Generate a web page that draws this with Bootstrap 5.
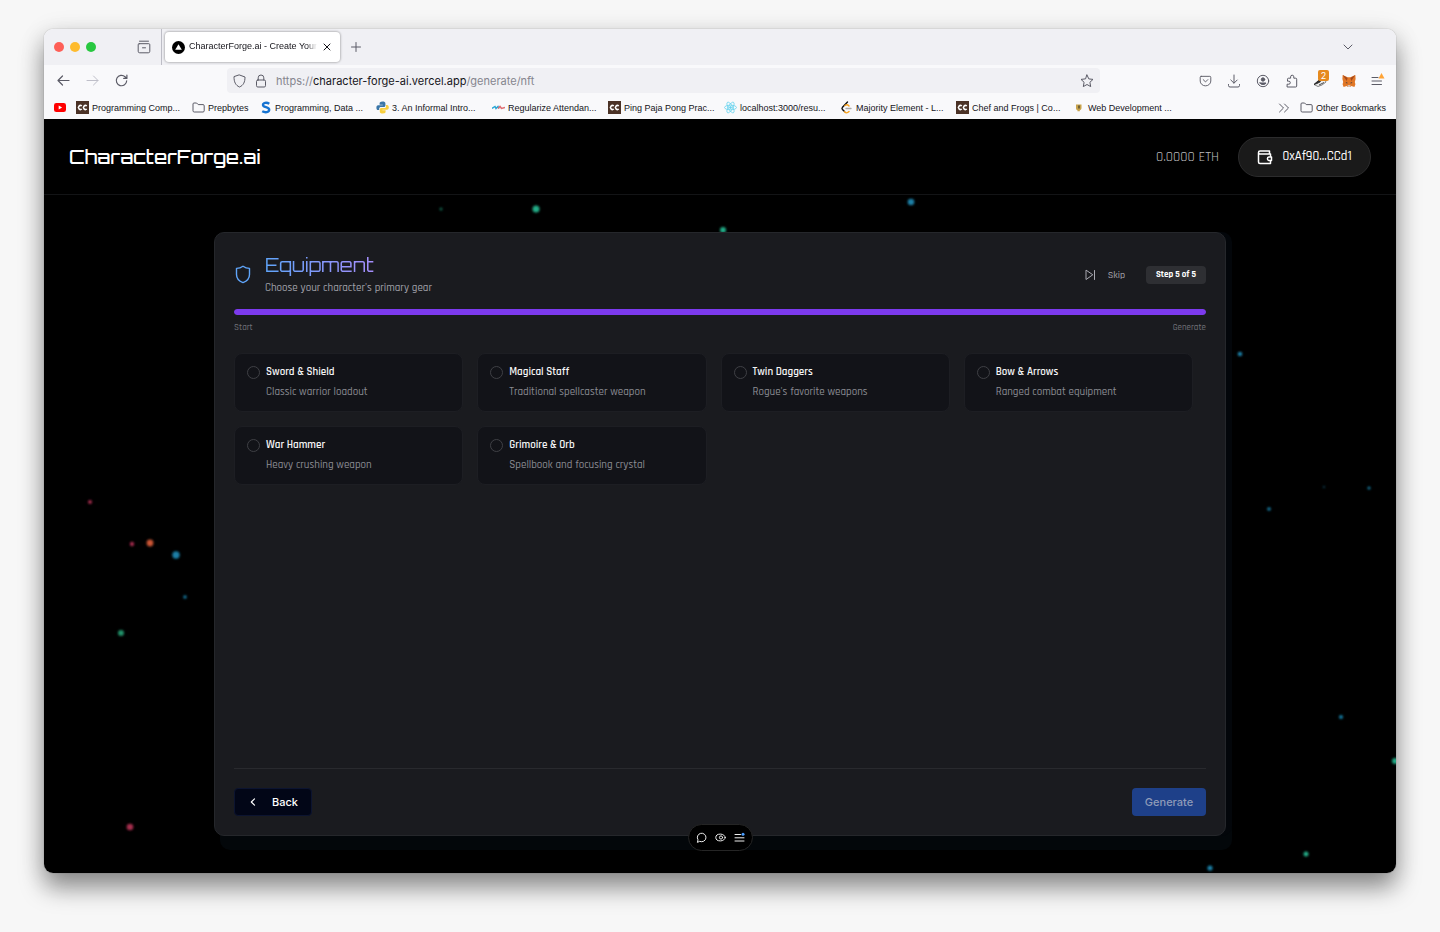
<!DOCTYPE html>
<html lang="en" data-bs-theme="light">
<head>
<meta charset="utf-8">
<meta name="viewport" content="width=device-width, initial-scale=1">
<title>CharacterForge.ai - Create Your Character</title>
<link href="https://cdn.jsdelivr.net/npm/bootstrap@5.3.0/dist/css/bootstrap.min.css" rel="stylesheet">
<style>
body{background:#f7f7f7;padding:29px 44px 59px;font-family:Inter,"Liberation Sans",sans-serif;color:#15141a}
svg{display:block;flex:none}
.ico{fill:none;stroke:currentColor;stroke-linecap:round;stroke-linejoin:round}
.plain{border:0;background:none;padding:0;color:inherit;display:flex;align-items:center}
.window{border-radius:9px;box-shadow:0 0 1px rgba(0,0,0,.5),0 15px 24px rgba(0,0,0,.4),0 4px 26px rgba(0,0,0,.12)}
.chrome{border-radius:9px 9px 0 0;background:#f9f9fb;color:#5b5b66}
.tabs-strip{height:36px;background:#f0f0f4;border-radius:9px 9px 0 0;padding:0 42px 0 10px}
.lights{gap:6px;margin-right:41px}
.lights i{width:10px;height:10px;border-radius:50%}
.tab-rule{width:1px;height:36px;background:#bdbdc6;margin:0 3px 0 10px}
.tab-active{width:175px;height:30px;border-radius:4px;background:#fff;box-shadow:0 0 2px 1px rgba(0,0,0,.22);padding:0 9px 0 7px;gap:4px;font-family:"Liberation Sans",sans-serif;font-size:9px;color:#15141a}
.tab-title{white-space:nowrap;-webkit-mask-image:linear-gradient(90deg,#000 92%,transparent)}
.navrow{height:31px;padding:0 10px 0 13px}
.urlbar{flex:0 1 873px;height:25px;border-radius:4px;background:#f0f0f4;padding:0 6px;font-size:11px;line-height:16px;color:#85858e}
.urlbar b{font-weight:400;color:#15141a}
.bookmarks{height:23px;padding:0 10px;gap:10px;font-family:"Liberation Sans",sans-serif;font-size:9px;line-height:12px}
.bookmarks a{color:#15141a;text-decoration:none;display:flex;align-items:center;gap:3px;white-space:nowrap;width:106px}
.bookmarks a.fit{width:auto}
.bookmarks a.folder{width:58px}
.app{background:#000;border-radius:0 0 9px 9px;color:#fff;font-family:Rajdhani,Roboto,sans-serif}
.stars{left:0;top:0;width:100%;height:100%}
.topbar{height:76px;border-bottom:1px solid #131416;padding:0 25px}
.brand{font-family:Orbitron,Inter,sans-serif;font-size:19px;line-height:28px;font-weight:500;color:#fff;text-decoration:none}
.balance{font-size:14px;line-height:20px;font-weight:400;color:#bcbcbe}
.wallet{height:40px;width:133px;border:1px solid #2c2c2d;border-radius:20px;background:#1a1a1a;color:#fff;font-size:13px;font-weight:500;gap:9px}
.stage{padding:37px 12px}
.panel{max-width:1012px;width:100%;background:#1a1b1f;border:1px solid #25272b;border-radius:10px;padding:19px;color:#fff;box-shadow:6px 0 0 #03060a,6px 14px 0 #03070a}
.shield{color:#60a5fa;margin-right:13px}
.panel-title{font-family:Orbitron,Inter,sans-serif;font-size:19px;line-height:26px;font-weight:400;margin:0;background:linear-gradient(90deg,#60a5fa,#c084fc 150px);-webkit-background-clip:text;background-clip:text;color:transparent}
.subtitle{font-size:11px;line-height:20px;font-weight:500;color:#a1a1aa;margin:0}
.skip{font-size:10px;color:#a8a8b0;gap:12px;font-weight:500}
.step{width:60px;height:18px;border-radius:4px;background:#2e2f33;color:#fff;font-size:9px;line-height:18px;font-weight:700;text-align:center}
.progress.gear{height:6px;border-radius:3px;margin-top:11px;background:#2a2b30}
.progress.gear .progress-bar{background:#7c3aed;border-radius:3px}
.ends{font-size:9px;line-height:16px;margin-top:5px;font-weight:500;color:#707178}
.options{display:grid;grid-template-columns:repeat(4,1fr);gap:14px;margin:17px 13px 20px 0;align-content:start}
.option{background:#121318;border:1px solid #1d1e23;border-radius:8px;padding:8px 12px 9px;gap:6px;line-height:20px;font-size:11px}
.option input{flex:none;width:13px;height:13px;margin:4px 0 0;background:transparent;border:1px solid #3f4045;border-radius:50%;appearance:none}
.option input:checked{border-color:#7c3aed;background:#7c3aed}
.option strong{display:block;font-weight:600;color:#f4f4f5}
.option span span{display:block;font-weight:500;color:#8b8c93}
.actions{border-top:1px solid #292a2e;padding-top:19px}
.act{height:28px;border-radius:4px;padding:0;font-family:Inter,sans-serif;font-size:11px;line-height:16px;font-weight:500}
.act-back{width:78px;background:#020617;border:1px solid #0c1430;color:#fff;gap:14px}
.act-back:hover{background:#0b1230;color:#fff}
.act-go,.act-go:disabled{width:74px;background:#1e4089;border:0;color:#8f9bb8;opacity:1}
.dock{bottom:22px}
.dock-pill{height:27px;width:65px;border-radius:14px;background:#000;border:1px solid #252525;gap:8px;color:#ededed}
.ext-badge{left:4px;top:-4px;width:11px;height:11px;background:#e68a1e;color:#fff;border-radius:2px;font-size:9px;line-height:11px;text-align:center}
</style>
</head>
<body class="d-flex flex-column min-vh-100">
<svg width="0" height="0" class="position-absolute" aria-hidden="true">
  <defs>
    <symbol id="chef" viewBox="0 0 13 13"><rect width="13" height="13" fill="#4b3226"/><path d="M5.8 5A2 2 0 1 0 5.8 8M10.8 5A2 2 0 1 0 10.8 8" fill="none" stroke="#fff" stroke-width="1.5"/></symbol>
    <symbol id="folder" viewBox="0 0 13 13"><path d="M1 3a1 1 0 0 1 1-1h2.600l1.600 1.600H11a1.200 1.200 0 0 1 1.200 1.200v5A1.200 1.200 0 0 1 11 11H2.200A1.200 1.200 0 0 1 1 9.800z" fill="none" stroke="#5b5b66" stroke-width="1"/></symbol>
  </defs>
</svg>

<div class="window d-flex flex-column flex-grow-1">
  <div class="chrome">
    <div class="tabs-strip d-flex align-items-center">
      <div class="lights d-flex"><i style="background:#fe5f57"></i><i style="background:#febb2e"></i><i style="background:#28c840"></i></div>
      <button class="plain" aria-label="Recent tabs"><svg class="ico" width="14" height="14" viewBox="0 0 14 14"><path d="M2.500 1.200h9M2.200 3.700h9.600a1 1 0 0 1 1 1v6.600a1.500 1.500 0 0 1-1.500 1.500H2.700a1.500 1.500 0 0 1-1.500-1.500V4.700a1 1 0 0 1 1-1zM5.500 7.800h3"/></svg></button>
      <span class="tab-rule"></span>
      <div class="tab-active d-flex align-items-center">
        <svg width="13" height="13" viewBox="0 0 13 13"><circle cx="6.500" cy="6.500" r="6.500" fill="#000"/><path d="M6.500 3.200 9.800 8.700H3.200z" fill="#fff"/></svg>
        <span class="tab-title">CharacterForge.ai - Create Your</span>
        <button class="plain ms-auto" aria-label="Close tab"><svg class="ico" width="8" height="8" viewBox="0 0 8 8"><path d="m1 1 6 6M7 1 1 7"/></svg></button>
      </div>
      <button class="plain ms-2" aria-label="New tab"><svg class="ico" width="16" height="16" viewBox="0 0 16 16"><path d="M8 3.500v9M3.500 8h9"/></svg></button>
      <button class="plain ms-auto" aria-label="List tabs"><svg class="ico" width="12" height="12" viewBox="0 0 12 12"><path d="m2 4 4 4 4-4"/></svg></button>
    </div>
    <div class="navrow d-flex align-items-center justify-content-between">
      <div class="d-flex" style="gap:16px">
        <button class="plain" aria-label="Go back"><svg class="ico" width="13" height="13" viewBox="0 0 13 13"><path d="M12 6.500H1M5.500 2 1 6.500 5.500 11" stroke-width="1.200"/></svg></button>
        <button class="plain" aria-label="Go forward" style="color:#bfbfc9"><svg class="ico" width="13" height="13" viewBox="0 0 13 13"><path d="M1 6.500h11M7.500 2 12 6.500 7.500 11"/></svg></button>
        <button class="plain" aria-label="Reload"><svg class="ico" width="13" height="13" viewBox="0 0 13 13"><path d="M11.700 6.800A5.200 5.200 0 1 1 10 2.700l1.700 1.500M11.900 1.200v3.200H8.700" stroke-width="1.200"/></svg></button>
      </div>
      <div class="urlbar d-flex align-items-center">
        <svg class="ico me-2" style="color:#5b5b66" width="13" height="14" viewBox="0 0 13 14"><path d="M6.500 1 12 3c0 5-1.500 8.300-5.500 10C2.500 11.300 1 8 1 3z"/></svg>
        <svg class="ico" style="color:#5b5b66" width="14" height="14" viewBox="0 0 14 14"><rect x="2.500" y="6" width="9" height="7" rx="1.300"/><path d="M4.200 6V3.800a2.800 2.800 0 0 1 5.600 0V6"/></svg>
        <span class="ms-2">https://<b>character-forge-ai.vercel.app</b>/generate/nft</span>
        <button class="plain ms-auto" aria-label="Bookmark this page"><svg class="ico" width="14" height="14" viewBox="0 0 14 14"><path d="m7 1 1.800 3.900 4.200.5-3.100 2.900.8 4.300L7 10.500l-3.700 2.100.8-4.300L1 5.400l4.200-.5z" stroke="#5b5b66"/></svg></button>
      </div>
      <div class="d-flex align-items-center" style="gap:15px">
        <button class="plain" aria-label="Pocket"><svg class="ico" width="13" height="14" viewBox="0 0 14 14"><path d="M2.300 2h9.400A1 1 0 0 1 12.700 3v4a5.700 5.200 0 0 1-11.400 0V3a1 1 0 0 1 1-1zM4.500 5.500 7 8l2.500-2.500"/></svg></button>
        <button class="plain" aria-label="Downloads"><svg class="ico" width="14" height="14" viewBox="0 0 14 14"><path d="M7 1v8M3.800 6 7 9.200 10.200 6M1.500 10.500v1a1.500 1.500 0 0 0 1.500 1.500h8a1.500 1.500 0 0 0 1.500-1.500v-1"/></svg></button>
        <button class="plain" aria-label="Account"><svg class="ico" width="14" height="14" viewBox="0 0 14 14"><circle cx="7" cy="7" r="5.700"/><circle cx="7" cy="5.500" r="1.700" fill="currentColor"/><path d="M4 9h6c-.8 2-5.200 2-6 0z" fill="currentColor"/></svg></button>
        <button class="plain" aria-label="Extensions"><svg class="ico" width="14" height="14" viewBox="0 0 14 14"><path d="M2.500 13h8.200a1 1 0 0 0 1-1V5.200a1 1 0 0 0-1-1H8.800V2.800a1.600 1.600 0 0 0-3.200 0v1.400H3.500a1 1 0 0 0-1 1v2h1.300a1.500 1.500 0 0 1 0 3H2.500z"/></svg></button>
        <button class="plain position-relative" aria-label="Blocker"><svg width="13" height="14" viewBox="0 0 13 14"><path d="M0 10.500 5 6l5-3 2 5-4 3-4 1.500z" fill="#eee" stroke="#555" stroke-width=".7"/><path d="m0 10.500 5-4.200L7.500 5 6 8l-3 1.500zM5 11l5-2.500" stroke="#222" stroke-width=".8" fill="#333"/></svg><span class="ext-badge position-absolute">2</span></button>
        <button class="plain" aria-label="MetaMask"><svg width="14" height="14" viewBox="0 0 14 14"><path d="M.7 1 5.600 3.200h2.800L13.300 1l.3 4-.8 3 .6 2.300-1 2.700-3-.9L8 13H6l-1.400-.9-3 .9-1-2.700L1.200 8l-.8-3z" fill="#e17726"/><path d="m.7 1 4.900 3L4.700 7zM13.300 1l-4.900 3 .9 3z" fill="#a5481b"/><path d="m3.500 8 2 .8-.4.900zM10.500 8l-2 .8.4.9z" fill="#233447"/><path d="M5.500 11h3L8 13H6z" fill="#d5bfb2"/></svg></button>
        <button class="plain" aria-label="Menu"><svg class="ico" width="15" height="18" viewBox="0 0 15 18"><path d="M1 5.500h6M1 9h9.500M1 12.500h9.500"/><path d="M10.500 1 13.500 6.500h-6z" fill="#ffa436" stroke="none"/></svg></button>
      </div>
    </div>
    <nav class="bookmarks d-flex align-items-center" aria-label="Bookmarks">
      <a href="#" class="fit" aria-label="YouTube"><svg width="12" height="13" viewBox="0 0 12 13"><rect y="2" width="12" height="9" rx="2.300" fill="#f00"/><path d="M4.700 4.500v4l3.400-2z" fill="#fff"/></svg></a>
      <a href="#"><svg width="13" height="13"><use href="#chef"/></svg>Programming Comp...</a>
      <a href="#" class="folder"><svg width="13" height="13"><use href="#folder"/></svg>Prepbytes</a>
      <a href="#"><svg width="12" height="13" viewBox="0 0 12 13"><path d="M9.300 2.700C6.500 1 3 1.700 3 4c0 2.700 6.200 1.700 6.200 4.700 0 2.600-4 3.200-7 1.500" fill="none" stroke="#1673d1" stroke-width="2.400"/></svg>Programming, Data ...</a>
      <a href="#"><svg width="13" height="13" viewBox="0 0 13 13"><path d="M6.500.5C4 .5 3.600 1.500 3.600 2.500v1.200h3.200v.6H2.200C.8 4.300.4 5.500.4 6.700c0 1.500.7 2.400 1.600 2.400h1.200V7.600c0-1 .8-1.600 1.700-1.600h3c.9 0 1.500-.7 1.500-1.500v-2C9.400 1 8.300.5 6.500.5z" fill="#3a76a8"/><path d="M6.700 12.500c2.500 0 2.900-1 2.900-2V9.300H6.400v-.6H11c1.400 0 1.800-1.200 1.800-2.400 0-1.500-.7-2.400-1.600-2.400H10v1.500C10 6.400 9.200 7 8.300 7h-3c-.9 0-1.500.7-1.500 1.500v2c0 1.500 1.100 2 2.900 2z" fill="#f8cf3e"/></svg>3. An Informal Intro...</a>
      <a href="#"><svg width="13" height="13" viewBox="0 0 13 13"><path d="M0 7.500 3 5.500l1 2 2-2 1 2" fill="none" stroke="#2ba7d6" stroke-width="1.500"/><path d="m6 7.500 2-2 1.500 2 3.500-1" fill="none" stroke="#df6d72" stroke-width="1.500"/></svg>Regularize Attendan...</a>
      <a href="#"><svg width="13" height="13"><use href="#chef"/></svg>Ping Paja Pong Prac...</a>
      <a href="#"><svg width="13" height="13" viewBox="0 0 13 13" fill="none" stroke="#67d3ee" stroke-width=".8"><ellipse cx="6.500" cy="6.500" rx="6" ry="2.300"/><ellipse cx="6.500" cy="6.500" rx="6" ry="2.300" transform="rotate(60 6.500 6.500)"/><ellipse cx="6.500" cy="6.500" rx="6" ry="2.300" transform="rotate(120 6.500 6.500)"/><circle cx="6.500" cy="6.500" r="1" fill="#67d3ee"/></svg>localhost:3000/resu...</a>
      <a href="#"><svg width="13" height="13" viewBox="0 0 13 13" fill="none" stroke-linecap="round" stroke-width="1.400"><path d="M7.500 1 2.500 6.200c-.7.800-.7 1.600 0 2.400l2 2" stroke="#111"/><path d="M4.500 10.800c1.500 1.500 3 1.300 4.500-.2M5 4.500c1.300-1 2.800-.8 4 .5" stroke="#f9a11b"/><path d="M6 7.500h5" stroke="#aaa"/></svg>Majority Element - L...</a>
      <a href="#"><svg width="13" height="13"><use href="#chef"/></svg>Chef and Frogs | Co...</a>
      <a href="#"><svg width="13" height="13" viewBox="0 0 13 13"><path d="M4 3.500h5.500v3.500c0 1.500-1 2-1.700 2.300v1H5.500v-1C4.500 9 4 8 4 7z" fill="#c7a24b"/><path d="M6 4.500h2v3H6z" fill="#6f6036"/></svg>Web Development ...</a>
      <a href="#" class="fit ms-auto" aria-label="More bookmarks"><svg class="ico" width="12" height="12" viewBox="0 0 12 12"><path d="m1.500 2 4 4-4 4M6.500 2l4 4-4 4" stroke="#5b5b66"/></svg></a>
      <a href="#" class="fit"><svg width="13" height="13"><use href="#folder"/></svg>Other Bookmarks</a>
    </nav>
  </div>

  <div class="app position-relative flex-grow-1 d-flex flex-column overflow-hidden">
    <svg class="stars position-absolute" aria-hidden="true">
      <defs>
        <filter id="glow" x="-1" y="-1" width="3" height="3"><feGaussianBlur stdDeviation=".9"/></filter>
      </defs>
      <g filter="url(#glow)">
        <g fill="#22ab86"><circle cx="492" cy="90" r="3.500"/><circle cx="679" cy="111" r="3"/><circle cx="397" cy="90" r="1.500" opacity=".6"/><circle cx="77" cy="514" r="3" fill="#219069"/><circle cx="1262" cy="735" r="2.500"/><circle cx="1351" cy="642" r="3"/></g>
        <g fill="#1c7fa6"><circle cx="867" cy="83" r="3.300"/><circle cx="1196" cy="235" r="2.300"/><circle cx="132" cy="436" r="3.700"/><circle cx="141" cy="478" r="1.700"/><circle cx="1225" cy="390" r="1.800"/><circle cx="1325" cy="369" r="1.500"/><circle cx="1297" cy="598" r="2"/><circle cx="1166" cy="749" r="2.600"/><circle cx="1280" cy="368" r="1" opacity=".6"/><circle cx="1183" cy="688" r="1.500" opacity=".6"/></g>
        <g fill="#a42d4d"><circle cx="46" cy="383" r="2"/><circle cx="88" cy="425" r="2.200"/><circle cx="86" cy="708" r="3.300"/><circle cx="106" cy="424" r="3.400" fill="#c95535"/></g>
      </g>
    </svg>

    <header class="topbar d-flex align-items-center justify-content-between position-relative">
      <a class="brand" href="#">CharacterForge.ai</a>
      <div class="d-flex align-items-center" style="gap:19px">
        <span class="balance">0.0000 ETH</span>
        <button class="wallet d-flex align-items-center justify-content-center p-0"><svg class="ico" width="16" height="16" viewBox="0 0 16 16" stroke-width="1.500"><path d="M12.500 4.500V2H3a1.500 1.500 0 0 0 0 3h10.500v3M1.500 3.500V13A1.500 1.500 0 0 0 3 14.500h10.500v-3M14.500 8H11.800a1.800 1.800 0 0 0 0 3.500h2.700z"/></svg>0xAf90...CCd1</button>
      </div>
    </header>

    <main class="stage flex-grow-1 d-flex justify-content-center position-relative">
      <form class="panel d-flex flex-column" onsubmit="return false">
        <div class="d-flex align-items-center">
          <svg class="ico shield" width="18" height="20" viewBox="0 0 18 20" stroke-width="1.400"><path d="M9 1.200c2 1.500 4 2.200 6.500 2.200v6c0 4-2.500 6.700-6.500 8.200-4-1.500-6.500-4.200-6.500-8.200v-6C5 3.400 7 2.700 9 1.200z"/></svg>
          <div class="flex-grow-1">
            <h1 class="panel-title">Equipment</h1>
            <p class="subtitle">Choose your character's primary gear</p>
          </div>
          <button type="button" class="plain skip"><svg class="ico" width="12" height="12" viewBox="0 0 12 12"><path d="M2 1.500v9L8.500 6zM10.500 1.500v9"/></svg>Skip</button>
          <span class="step" style="margin-left:21px">Step 5 of 5</span>
        </div>
        <div class="progress gear" role="progressbar" aria-label="Steps completed" aria-valuenow="100" aria-valuemin="0" aria-valuemax="100"><div class="progress-bar w-100"></div></div>
        <div class="ends d-flex justify-content-between"><span>Start</span><span>Generate</span></div>

        <div class="options flex-grow-1">
          <label class="option d-flex align-items-start"><input type="radio" name="gear"><span><strong>Sword &amp; Shield</strong><span>Classic warrior loadout</span></span></label>
          <label class="option d-flex align-items-start"><input type="radio" name="gear"><span><strong>Magical Staff</strong><span>Traditional spellcaster weapon</span></span></label>
          <label class="option d-flex align-items-start"><input type="radio" name="gear"><span><strong>Twin Daggers</strong><span>Rogue's favorite weapons</span></span></label>
          <label class="option d-flex align-items-start"><input type="radio" name="gear"><span><strong>Bow &amp; Arrows</strong><span>Ranged combat equipment</span></span></label>
          <label class="option d-flex align-items-start"><input type="radio" name="gear"><span><strong>War Hammer</strong><span>Heavy crushing weapon</span></span></label>
          <label class="option d-flex align-items-start"><input type="radio" name="gear"><span><strong>Grimoire &amp; Orb</strong><span>Spellbook and focusing crystal</span></span></label>
        </div>

        <div class="actions d-flex justify-content-between">
          <button type="button" class="btn act act-back d-flex align-items-center justify-content-center"><svg class="ico" width="10" height="10" viewBox="0 0 10 10" stroke-width="1.200"><path d="M6.500 1.800 3.300 5l3.200 3.200"/></svg>Back</button>
          <button type="submit" class="btn act act-go" disabled>Generate</button>
        </div>
      </form>
    </main>

    <div class="dock position-absolute start-0 end-0 d-flex justify-content-center">
      <div class="dock-pill d-flex align-items-center justify-content-center">
        <button class="plain" aria-label="Comment"><svg class="ico" width="11" height="11" viewBox="0 0 11 11"><path d="M1.500 10 2 7.800A4.300 4.300 0 1 1 4 9.500z"/></svg></button>
        <button class="plain" aria-label="Draft mode"><svg class="ico" width="11" height="11" viewBox="0 0 11 11"><ellipse cx="5.500" cy="5.500" rx="4.700" ry="3.400"/><circle cx="6" cy="5.500" r="1.600"/></svg></button>
        <button class="plain" aria-label="Toolbar menu"><svg class="ico" width="11" height="11" viewBox="0 0 11 11"><path d="M1 2.500h5.500M1 5.800h9M1 9h9"/><circle cx="9" cy="2.300" r="1.500" fill="#4a9dff" stroke="none"/></svg></button>
      </div>
    </div>
  </div>
</div>
<script src="https://cdn.jsdelivr.net/npm/bootstrap@5.3.0/dist/js/bootstrap.bundle.min.js"></script>
</body>
</html>
